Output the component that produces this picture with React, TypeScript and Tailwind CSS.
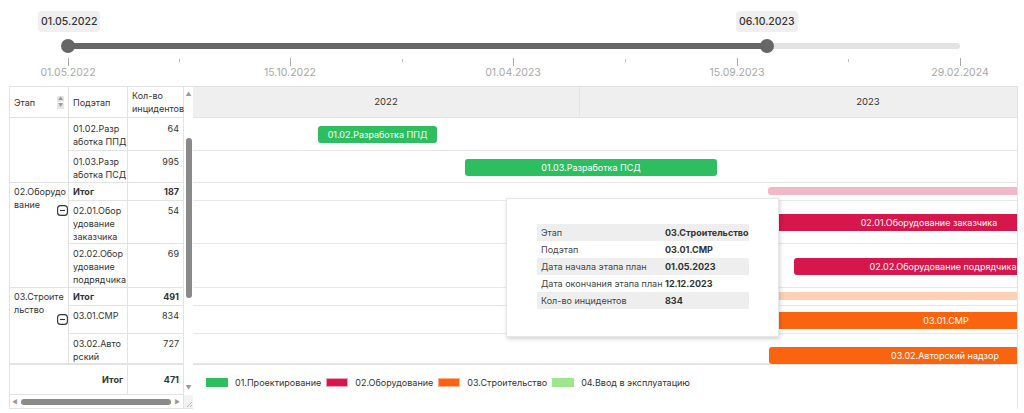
import type { ReactNode } from 'react'

const rows = [33, 32, 18, 43, 44, 18, 28, 30]

type Bar = { row: number; left: number; width: number; color: string; label?: string; thin?: boolean }

// left offsets are relative to the gantt body (x = 193)
const bars: Bar[] = [
  { row: 0, left: 125, width: 119, color: 'bg-[#2dbe60]', label: '01.02.Разработка ППД' },
  { row: 1, left: 272, width: 252, color: 'bg-[#2dbe60]', label: '01.03.Разработка ПСД' },
  { row: 2, left: 575, width: 300, color: 'bg-[#f2b8c8]', thin: true },
  { row: 3, left: 577, width: 318, color: 'bg-[#d7164b]', label: '02.01.Оборудование заказчика' },
  { row: 4, left: 601, width: 298, color: 'bg-[#d7164b]', label: '02.02.Оборудование подрядчика' },
  { row: 5, left: 575, width: 300, color: 'bg-[#fdd0b6]', thin: true },
  { row: 6, left: 577, width: 352, color: 'bg-[#fb640f]', label: '03.01.СМР' },
  { row: 7, left: 576, width: 352, color: 'bg-[#fb640f]', label: '03.02.Авторский надзор' },
]

const ticks = [
  { x: 68, label: '01.05.2022' },
  { x: 290, label: '15.10.2022' },
  { x: 513, label: '01.04.2023' },
  { x: 737, label: '15.09.2023' },
  { x: 960, label: '29.02.2024' },
]
const minor = [179, 402, 625, 848]

function MinusIcon() {
  return (
    <svg width="11" height="11" viewBox="0 0 11 11" className="text-[#333]">
      <rect x="0.6" y="0.6" width="9.8" height="9.8" rx="3" fill="none" stroke="currentColor" strokeWidth="1.1" />
      <line x1="3" y1="5.5" x2="8" y2="5.5" stroke="currentColor" strokeWidth="1.1" />
    </svg>
  )
}

function Slider() {
  return (
    <div className="relative h-[86px] w-full">
      <div className="absolute left-[38px] top-[11px] rounded-sm bg-[#efefef] px-[3px] py-[4px] text-[10.5px] leading-[13px] font-medium text-[#333]">
        01.05.2022
      </div>
      <div className="absolute left-[736px] top-[11px] rounded-sm bg-[#efefef] px-[3px] py-[4px] text-[10.5px] leading-[13px] font-medium text-[#333]">
        06.10.2023
      </div>
      <div className="absolute left-[68px] top-[43px] h-[6px] w-[892px] rounded-full bg-[#e2e2e2]" />
      <div className="absolute left-[68px] top-[43px] h-[6px] w-[699px] bg-[#666]" />
      <div className="absolute left-[61px] top-[39px] h-[14px] w-[14px] rounded-full bg-[#666]" />
      <div className="absolute left-[760px] top-[39px] h-[14px] w-[14px] rounded-full bg-[#666]" />
      {ticks.map((t) => (
        <div key={t.x}>
          <div className="absolute top-[58px] h-[8px] w-px bg-[#aaa]" style={{ left: t.x }} />
          <div
            className="absolute top-[66px] w-[80px] text-center text-[10.5px] leading-[13px] text-[#a8a8a8]"
            style={{ left: t.x - 40 }}
          >
            {t.label}
          </div>
        </div>
      ))}
      {minor.map((x) => (
        <div key={x} className="absolute top-[59px] h-[3px] w-px bg-[#bbb]" style={{ left: x }} />
      ))}
    </div>
  )
}

function Cell({ children, className = '' }: { children?: ReactNode; className?: string }) {
  return (
    <div className={`whitespace-nowrap border-b border-r border-[#e3e3e3] px-[4px] py-[2px] text-[9px] leading-[13px] text-[#333] ${className}`}>
      {children}
    </div>
  )
}

function LeftTable() {
  return (
    <div className="flex w-[184px] shrink-0 flex-col border-l border-t border-[#e3e3e3]">
      <div className="flex">
        <div className="w-[174px]">
          {/* header */}
          <div className="grid h-[31px] grid-cols-[59px_59px_56px]">
            <Cell className="flex items-center justify-between">
              <span>Этап</span>
              <span className="flex flex-col gap-[1px]">
                <span className="flex h-[6px] w-[7px] items-center justify-center rounded-[1px] bg-[#e6e6e6] text-[5px] leading-none text-[#999]">▲</span>
                <span className="flex h-[6px] w-[7px] items-center justify-center rounded-[1px] bg-[#e6e6e6] text-[5px] leading-none text-[#999]">▼</span>
              </span>
            </Cell>
            <Cell className="flex items-center">Подэтап</Cell>
            <Cell className="flex items-center">
              <span>
                Кол-во
                <br />
                инцидентов
              </span>
            </Cell>
          </div>
          {/* body */}
          <div
            className="grid h-[246px] grid-cols-[59px_59px_56px] overflow-hidden"
            style={{ gridTemplateRows: rows.map((r) => `${r}px`).join(' ') }}
          >
            <Cell className="row-span-2" />
            <Cell className="pt-[4px]">
              01.02.Разр
              <br />
              аботка ППД
            </Cell>
            <Cell className="pt-[4px] text-right">64</Cell>
            <Cell className="pt-[4px]">
              01.03.Разр
              <br />
              аботка ПСД
            </Cell>
            <Cell className="pt-[4px] text-right">995</Cell>

            <Cell className="relative row-span-3">
              02.Оборудо
              <br />
              вание
              <span className="absolute left-[47px] top-[22px]">
                <MinusIcon />
              </span>
            </Cell>
            <Cell className="font-bold">Итог</Cell>
            <Cell className="text-right font-bold">187</Cell>
            <Cell className="pt-[3px]">
              02.01.Обор
              <br />
              удование
              <br />
              заказчика
            </Cell>
            <Cell className="pt-[3px] text-right">54</Cell>
            <Cell className="pt-[3px]">
              02.02.Обор
              <br />
              удование
              <br />
              подрядчика
            </Cell>
            <Cell className="pt-[3px] text-right">69</Cell>

            <Cell className="relative row-span-3">
              03.Строите
              <br />
              льство
              <span className="absolute left-[47px] top-[26px]">
                <MinusIcon />
              </span>
            </Cell>
            <Cell className="font-bold">Итог</Cell>
            <Cell className="text-right font-bold">491</Cell>
            <Cell className="pt-[3px]">03.01.СМР</Cell>
            <Cell className="pt-[3px] text-right">834</Cell>
            <Cell className="pt-[3px]">
              03.02.Авто
              <br />
              рский
            </Cell>
            <Cell className="pt-[3px] text-right">727</Cell>
          </div>
          {/* footer */}
          <div className="grid h-[31px] grid-cols-[118px_56px] border-t border-[#e3e3e3]">
            <Cell className="flex items-center justify-end font-bold">Итог</Cell>
            <Cell className="flex items-center justify-end font-bold">471</Cell>
          </div>
        </div>
        {/* vertical scrollbar */}
        <div className="flex w-[10px] flex-col items-center">
          <span className="mt-[3px] text-[6px] leading-[8px] text-[#999]">▲</span>
          <div className="h-[40px]" />
          <div className="h-[160px] w-[6px] rounded-full bg-[#8a8a8a]" />
          <div className="flex-1" />
          <span className="mb-[3px] text-[6px] leading-[8px] text-[#999]">▼</span>
        </div>
      </div>
      {/* horizontal scrollbar */}
      <div className="flex h-[14px] items-center border-b border-[#e3e3e3]">
        <span className="ml-[2px] text-[6px] leading-none text-[#999]">◀</span>
        <div className="ml-[3px] h-[6px] w-[150px] rounded-full bg-[#8a8a8a]" />
        <span className="ml-[4px] text-[6px] leading-none text-[#999]">▶</span>
        <div className="ml-auto flex h-full w-[10px] items-end justify-end border-l border-[#e3e3e3] bg-[#f2f2f2]">
          <svg width="8" height="8" viewBox="0 0 8 8">
            <line x1="7" y1="2" x2="2" y2="7" stroke="#aaa" strokeWidth="0.8" />
            <line x1="7" y1="5" x2="5" y2="7" stroke="#aaa" strokeWidth="0.8" />
          </svg>
        </div>
      </div>
    </div>
  )
}

function Tooltip() {
  const items = [
    ['Этап', '03.Строительство'],
    ['Подэтап', '03.01.СМР'],
    ['Дата начала этапа план', '01.05.2023'],
    ['Дата окончания этапа план', '12.12.2023'],
    ['Кол-во инцидентов', '834'],
  ]
  return (
    <div className="absolute left-[313px] top-[111px] z-10 h-[139px] w-[273px] border border-[#e6e6e6] bg-white pl-[30px] pt-[25px] shadow-[1px_2px_4px_rgba(0,0,0,0.18)]">
      <div className="w-[212px]">
        {items.map(([k, v], i) => (
          <div
            key={k}
            className={`flex h-[17px] items-center whitespace-nowrap text-[9px] ${i % 2 === 0 ? 'bg-[#eeeeee]' : 'bg-white'}`}
          >
            <span className="w-[128px] pl-[4px] text-[#444]">{k}</span>
            <span className="font-bold text-[#333]">{v}</span>
          </div>
        ))}
      </div>
    </div>
  )
}

function Gantt() {
  return (
    <div className="relative flex w-[825px] shrink-0 flex-col border-r border-t border-[#e3e3e3]">
      <div className="flex h-[31px] overflow-hidden border-b border-[#e3e3e3] bg-[#efefef] text-[9.5px] text-[#333]">
        <div className="flex w-[387px] shrink-0 items-center justify-center border-r border-[#e3e3e3]">2022</div>
        <div className="flex w-[576px] shrink-0 items-center justify-center">2023</div>
      </div>
      <div className="relative h-[246px] overflow-hidden">
        {rows.map((h, i) => (
          <div key={i} className="relative border-b border-[#e8e8e8]" style={{ height: h }}>
            {bars
              .filter((b) => b.row === i)
              .map((b) => (
                <div
                  key={b.row}
                  className={`absolute flex items-center justify-center whitespace-nowrap text-[9px] text-white ${b.color} ${
                    b.thin ? 'h-[8px] rounded-[3px]' : 'h-[17px] rounded-[3px]'
                  }`}
                  style={{ left: b.left, width: b.width, top: b.thin ? 4 : Math.round((h - 17) / 2) + (i === 7 ? 6 : 0) }}
                >
                  {b.label}
                </div>
              ))}
          </div>
        ))}
      </div>
      <div className="flex h-[31px] items-center border-t border-[#e3e3e3] pl-[13px] pt-[5px] text-[9px] text-[#333]">
        <span className="h-[9px] w-[22px] bg-[#2dbe60]" />
        <span className="ml-[7px] mr-[5px]">01.Проектирование</span>
        <span className="h-[9px] w-[22px] border border-[#f3a0b8] bg-[#d7164b]" />
        <span className="ml-[7px] mr-[5px]">02.Оборудование</span>
        <span className="h-[9px] w-[22px] border border-[#fdb08a] bg-[#fb640f]" />
        <span className="ml-[7px] mr-[5px]">03.Строительство</span>
        <span className="h-[9px] w-[22px] bg-[#9ee68e]" />
        <span className="ml-[7px]">04.Ввод в эксплуатацию</span>
      </div>
      <Tooltip />
    </div>
  )
}

export default function App() {
  return (
    <div className="h-[413px] w-[1024px] overflow-hidden bg-white font-['Inter',sans-serif]">
      <Slider />
      <div className="flex pl-[9px]">
        <LeftTable />
        <Gantt />
      </div>
    </div>
  )
}
